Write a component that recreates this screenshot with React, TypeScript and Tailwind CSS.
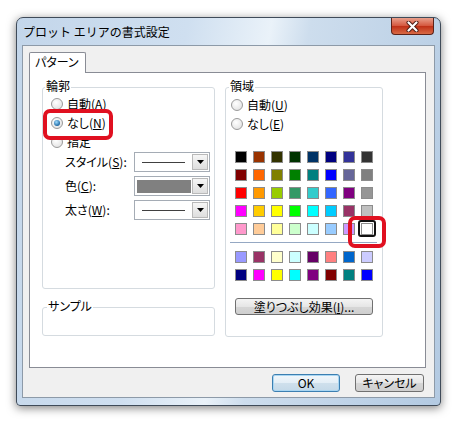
import React from "react";

const FONT = "[font-family:'Noto_Sans_CJK_JP','Noto_Sans',sans-serif] [font-feature-settings:'palt']";

const basic = [
  ["#000000", "#993300", "#333300", "#003300", "#003366", "#000080", "#333399", "#333333"],
  ["#800000", "#FF6600", "#808000", "#008000", "#008080", "#0000FF", "#666699", "#808080"],
  ["#FF0000", "#FF9900", "#99CC00", "#339966", "#33CCCC", "#3366FF", "#800080", "#969696"],
  ["#FF00FF", "#FFCC00", "#FFFF00", "#00FF00", "#00FFFF", "#00CCFF", "#993366", "#C0C0C0"],
  ["#FF99CC", "#FFCC99", "#FFFF99", "#CCFFCC", "#CCFFFF", "#99CCFF", "#CC99FF", "#FFFFFF"],
];

const chart = [
  ["#9999FF", "#993366", "#FFFFCC", "#CCFFFF", "#660066", "#FF8080", "#0066CC", "#CCCCFF"],
  ["#000080", "#FF00FF", "#FFFF00", "#00FFFF", "#800080", "#800000", "#008080", "#0000FF"],
];

function Radio({ checked, label }: { checked?: boolean; label: React.ReactNode }) {
  return (
    <div className="flex items-center gap-[4px] h-[19px]">
      <span className="w-[12px] h-[12px] rounded-full border border-[#9a9a9a] bg-[radial-gradient(circle_at_40%_35%,#ffffff,#dcdcdc)] flex items-center justify-center">
        {checked && (
          <span className="w-[6px] h-[6px] rounded-full bg-[radial-gradient(circle_at_40%_35%,#9fdcff,#1f6aa5_70%,#0d3f6e)]" />
        )}
      </span>
      <span className="leading-[14px]">{label}</span>
    </div>
  );
}

function Mn({ k }: { k: string }) {
  return (
    <>
      (<span className="underline underline-offset-[1px]">{k}</span>)
    </>
  );
}

function Dropdown({ fill }: { fill?: boolean }) {
  return (
    <div className="w-[76px] h-[20px] border border-[#a5acb5] bg-white flex items-stretch">
      <div className="flex-1 flex items-center">
        {fill ? (
          <div className="ml-[2px] mr-[1px] w-full h-[13px] bg-[#808080]" />
        ) : (
          <div className="ml-[7px] mr-[7px] w-full h-px bg-[#404040]" />
        )}
      </div>
      <div className="w-[16px] my-[1px] mr-[1px] border border-[#b9b9b9] bg-[linear-gradient(#f6f6f6,#dedede)] flex items-center justify-center">
        <svg width="7" height="4" viewBox="0 0 7 4">
          <path d="M0 0h7L3.5 4z" fill="#000" />
        </svg>
      </div>
    </div>
  );
}

function Swatch({ c, selected }: { c: string; selected?: boolean }) {
  return (
    <div className="relative w-[12px] h-[12px]">
      <div className="w-full h-full border border-[#8c8c8c]" style={{ backgroundColor: c }} />
      {selected && (
        <div className="absolute -left-[3px] -top-[3px] w-[18px] h-[17px] border-2 border-[#111] rounded-[3px]" />
      )}
    </div>
  );
}

export default function App() {
  return (
    <div className={`w-[465px] h-[430px] bg-white overflow-hidden pt-[17px] pl-[16px] text-[12px] text-black ${FONT}`}>
      {/* window */}
      <div className="w-[425px] h-[389px] flex flex-col rounded-t-[7px] rounded-b-[4px] border border-[#3f4b59] shadow-[0_2px_10px_rgba(0,0,0,0.5)] bg-[linear-gradient(100deg,#c3d6ea_0%,#cfdff0_35%,#eaf2f9_52%,#cddded_60%,#b3cae2_100%)]">
        {/* title bar */}
        <div className="h-[27px] flex items-start justify-between">
          <div className="pl-[6px] pt-[6px] text-[12px] leading-[16px] [font-feature-settings:normal]">プロット エリアの書式設定</div>
          <div className="mr-[6px] w-[43px] h-[17px] rounded-b-[4px] border border-t-0 border-[#5c2218] bg-[linear-gradient(#e9a08c,#d4553c_50%,#bf2f16_51%,#d86a45)] flex items-center justify-center">
            <svg width="13" height="11" viewBox="0 0 13 11">
              <path d="M2.5 1.5l8 8M10.5 1.5l-8 8" stroke="#4a1a12" strokeWidth="4" strokeLinecap="round" />
              <path d="M2.5 1.5l8 8M10.5 1.5l-8 8" stroke="#fff" strokeWidth="2.2" strokeLinecap="round" />
            </svg>
          </div>
        </div>

        {/* client area */}
        <div className="mx-[5px] h-[353px] bg-[#f0f0f0] border border-[#8d9aa8] flex flex-col">
          {/* tab */}
          <div className="ml-[6px] mt-[6px] w-[57px] h-[21px] -mb-px relative z-10 bg-white border border-b-0 border-[#898c95] rounded-t-[2px] pl-[5px] pt-[2px] leading-[14px]">
            パターン
          </div>
          {/* tab panel */}
          <div className="ml-[6px] w-[397px] h-[296px] border border-[#898c95] bg-white flex">
            {/* left column */}
            <div className="ml-[12px] mt-[14px] w-[173px] flex flex-col">
              <div className="relative h-[202px] border border-[#d5dbe0] rounded-[3px] flex flex-col">
                <div className="absolute left-[2px] -top-[9px] bg-white px-px leading-[14px]">輪郭</div>
                <div className="pl-[8px] pt-[6px] flex flex-col">
                  <Radio label={<>自動<Mn k="A" /></>} />
                  <Radio checked label={<>なし<Mn k="N" /></>} />
                  <Radio label="指定" />
                </div>
                <div className="pl-[22px] mt-px flex flex-col gap-[4px]">
                  <div className="flex items-center">
                    <span className="w-[69px] leading-[14px]">スタイル<Mn k="S" />:</span>
                    <Dropdown />
                  </div>
                  <div className="flex items-center">
                    <span className="w-[69px] leading-[14px]">色<Mn k="C" />:</span>
                    <Dropdown fill />
                  </div>
                  <div className="flex items-center">
                    <span className="w-[69px] leading-[14px]">太さ<Mn k="W" />:</span>
                    <Dropdown />
                  </div>
                </div>
                <div className="absolute left-0 top-[21px] w-[70px] h-[31px] border-[4px] border-[#e01020] rounded-[7px]" />
              </div>
              <div className="relative mt-[18px] h-[29px] border border-[#d5dbe0] rounded-[3px]">
                <div className="absolute left-[4px] -top-[9px] bg-white px-px leading-[14px]">サンプル</div>
              </div>
            </div>

            {/* right column */}
            <div className="ml-[10px] mt-[14px] w-[158px] h-[250px] relative border border-[#d5dbe0] rounded-[3px] flex flex-col">
              <div className="absolute left-[3px] -top-[9px] bg-white px-px leading-[14px]">領域</div>
              <div className="pl-[5px] pt-[7px] flex flex-col">
                <Radio label={<>自動<Mn k="U" /></>} />
                <Radio label={<>なし<Mn k="E" /></>} />
              </div>
              <div className="ml-[9px] mt-[18px] grid grid-cols-[repeat(8,12px)] gap-[6px]">
                {basic.flat().map((c, i) => (
                  <Swatch key={i} c={c} selected={i === 39} />
                ))}
              </div>
              <div className="ml-[4px] mt-[7px] w-[147px] h-px bg-[#95a8c3]" />
              <div className="ml-[9px] mt-[8px] grid grid-cols-[repeat(8,12px)] gap-[6px]">
                {chart.flat().map((c, i) => (
                  <Swatch key={i} c={c} />
                ))}
              </div>
              <div className="ml-[9px] mt-[17px] w-[138px] h-[17px] rounded-[3px] border border-[#707070] bg-[linear-gradient(#f4f4f4,#e6e6e6_50%,#d6d6d6_51%,#cfcfcf)] flex items-center justify-center leading-[14px]">
                塗りつぶし効果<Mn k="I" />...
              </div>
              <div className="absolute left-[122px] top-[128px] w-[38px] h-[32px] border-[4px] border-[#e01020] rounded-[7px]" />
            </div>
          </div>

          {/* buttons */}
          <div className="mt-[6px] mr-[10px] flex justify-end gap-[15px]">
            <div className="w-[68px] h-[18px] rounded-[3px] border border-[#3c7fb1] bg-[linear-gradient(#f2f7fb,#e3eef6_50%,#cfe0ec_51%,#c4d9e8)] shadow-[inset_0_0_0_1px_#a9d6f2] flex items-center justify-center leading-[14px]">
              OK
            </div>
            <div className="w-[69px] h-[18px] rounded-[3px] border border-[#707070] bg-[linear-gradient(#f4f4f4,#e6e6e6_50%,#d6d6d6_51%,#cfcfcf)] flex items-center justify-center leading-[14px]">
              キャンセル
            </div>
          </div>
        </div>
      </div>
    </div>
  );
}
